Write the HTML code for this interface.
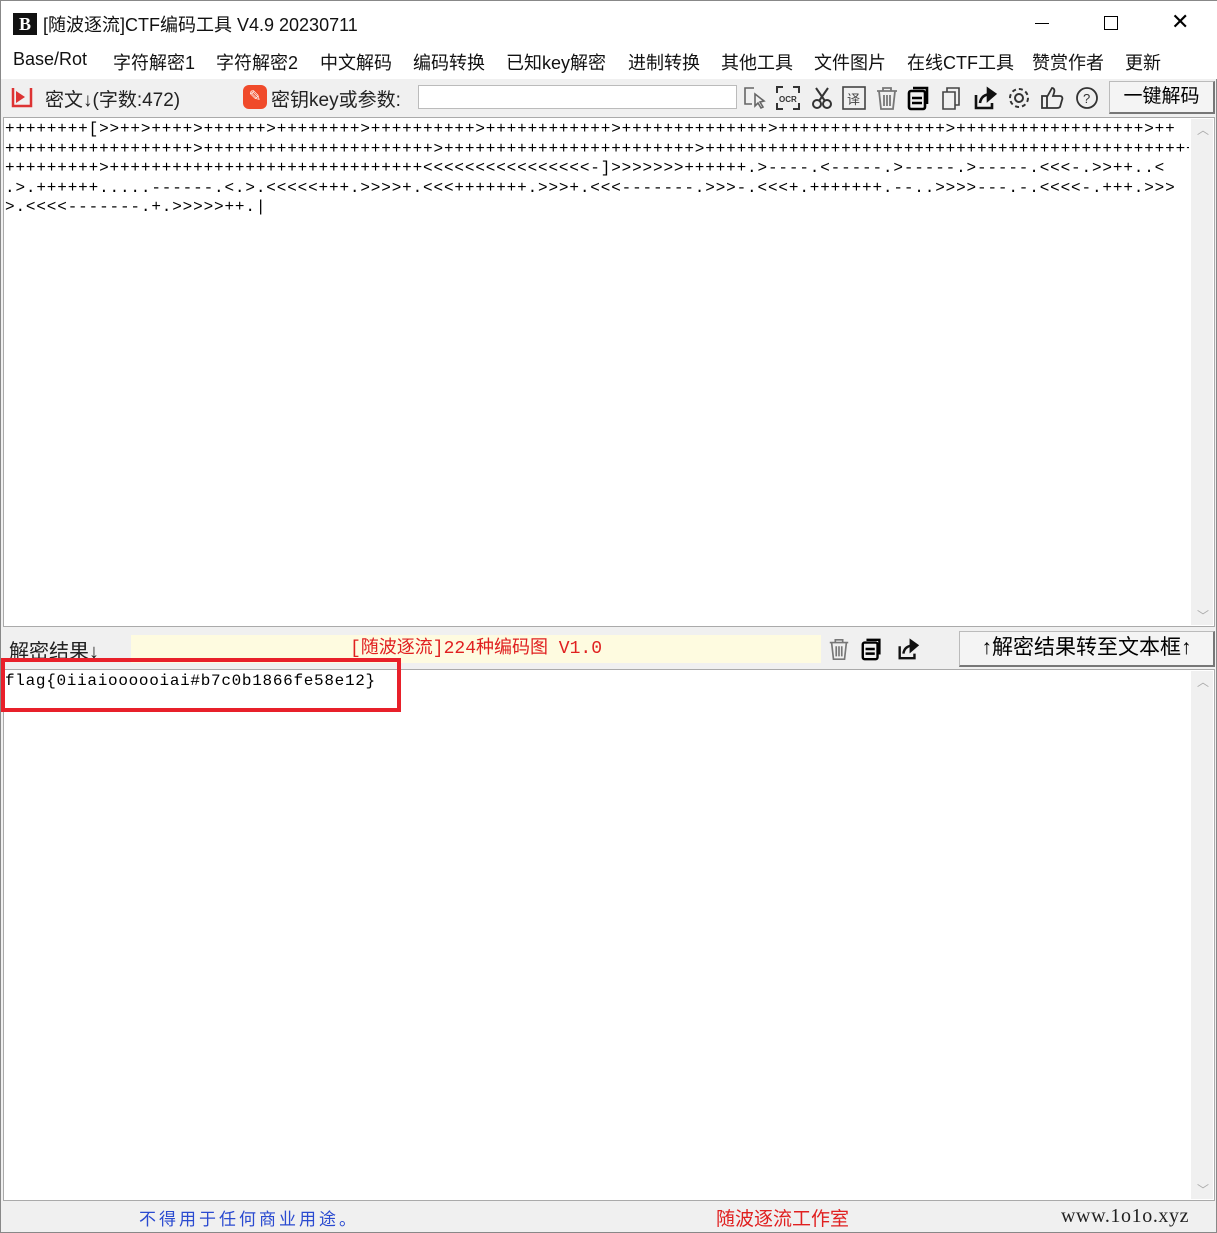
<!DOCTYPE html>
<html><head><meta charset="utf-8"><style>
*{margin:0;padding:0;box-sizing:border-box}
body{width:1217px;height:1233px;background:#f0f0f0;font-family:"Liberation Sans","Noto Sans CJK SC",sans-serif;position:relative;overflow:hidden;border:1px solid #888}
.a{position:absolute;white-space:nowrap}
.title{left:0;top:0;width:1217px;height:46px;background:#fff}
.menu{left:0;top:44px;width:1217px;height:34px;background:#fff;font-size:18px;color:#111}
.menu span{position:absolute;top:4px}
.ta{background:#fff;border:1px solid #aaa}
.mono{font-family:"Liberation Mono","Noto Sans CJK SC",monospace;font-size:16px;color:#000;line-height:19.5px;letter-spacing:0.85px}
.sb{background:#f0f0f0}
.ic{position:absolute;top:84px;width:26px;height:26px}
</style></head><body>
<div class="a title"></div>
<div class="a" style="left:12px;top:12px;width:24px;height:22px;background:#111;color:#fff;font:bold 18px 'Liberation Serif',serif;text-align:center;line-height:22px">B</div>
<div class="a" style="left:42px;top:10px;font-size:18px;color:#111">[随波逐流]CTF编码工具 V4.9 20230711</div>
<div class="a" style="left:1034px;top:22px;width:14px;height:1px;background:#000"></div>
<div class="a" style="left:1103px;top:15px;width:14px;height:14px;border:1px solid #000"></div>
<div class="a" style="left:1170px;top:8px;font-size:22px;color:#000">✕</div>
<div class="a menu">
<span style="left:12px">Base/Rot</span><span style="left:112px">字符解密1</span><span style="left:215px">字符解密2</span><span style="left:319px">中文解码</span><span style="left:412px">编码转换</span><span style="left:505px">已知key解密</span><span style="left:627px">进制转换</span><span style="left:720px">其他工具</span><span style="left:813px">文件图片</span><span style="left:906px">在线CTF工具</span><span style="left:1031px">赞赏作者</span><span style="left:1124px">更新</span>
</div>
<svg class="a" style="left:8px;top:84px" width="26" height="24"><path d="M4 3v18h18V3" fill="none" stroke="#d33" stroke-width="2.5"/><path d="M7 6l9 6-9 6z" fill="#d33"/></svg>
<div class="a" style="left:44px;top:84px;font-size:19px;color:#222">密文↓(字数:472)</div>
<div class="a" style="left:242px;top:84px;width:24px;height:24px;background:#f04a2a;border-radius:6px;color:#fff;font-size:15px;text-align:center;line-height:24px">✎</div>
<div class="a" style="left:270px;top:84px;font-size:19px;color:#222">密钥key或参数:</div>
<div class="a" style="left:417px;top:84px;width:319px;height:24px;background:#fff;border:1px solid #bbb"></div>
<svg class="ic" style="left:741px" viewBox="0 0 26 26" fill="none" stroke="#666" stroke-width="1.6"><path d="M12 3H3v16h7"/><path d="M13 9l9 7-4 1 3 5-2 1-3-5-3 3z"/></svg>
<svg class="ic" style="left:774px" viewBox="0 0 26 26" fill="none" stroke="#333" stroke-width="2"><path d="M2 8V2h6M18 2h6v6M24 18v6h-6M8 24H2v-6"/><text x="4" y="17" font-size="8" font-weight="bold" fill="#333" stroke="none" font-family="Liberation Sans">OCR</text></svg>
<svg class="ic" style="left:808px" viewBox="0 0 26 26" fill="none" stroke="#333" stroke-width="2"><circle cx="8" cy="19" r="4"/><circle cx="18" cy="19" r="4"/><path d="M10 16L19 3M16 16L7 3"/></svg>
<svg class="ic" style="left:840px" viewBox="0 0 26 26" fill="none" stroke="#444" stroke-width="1.6"><rect x="2" y="2" width="22" height="22"/><text x="6" y="19" font-size="13" fill="#444" stroke="none">译</text></svg>
<svg class="ic" style="left:873px" viewBox="0 0 26 26" fill="none" stroke="#777" stroke-width="1.8"><path d="M3 6h20M9 6V3h8v3M5 6l2 18h12l2-18M10 10v11M13 10v11M16 10v11"/></svg>
<svg class="ic" style="left:905px" viewBox="0 0 26 26" fill="none" stroke="#000" stroke-width="2.6"><rect x="3" y="6" width="16" height="18" rx="2"/><path d="M7 3h14v16M6 13h10M6 18h10"/></svg>
<svg class="ic" style="left:938px" viewBox="0 0 26 26" fill="none" stroke="#444" stroke-width="1.6"><path d="M4 7h12v17H4zM8 7V3h12v17h-4"/></svg>
<svg class="ic" style="left:971px" viewBox="0 0 26 26" fill="none" stroke="#111" stroke-width="2.6"><path d="M4 10v13h16v-5"/><path d="M8 18c1-7 6-9 12-9" /><path d="M16 4l7 5-7 6z" fill="#111"/></svg>
<svg class="ic" style="left:1005px" viewBox="0 0 26 26" fill="none" stroke="#333" stroke-width="2"><circle cx="13" cy="13" r="4"/><circle cx="13" cy="13" r="9" stroke-dasharray="4 3"/></svg>
<svg class="ic" style="left:1038px" viewBox="0 0 26 26" fill="none" stroke="#333" stroke-width="1.8"><path d="M3 11h5v12H3zM8 12l5-9c2 0 3 2 2 5l-1 3h7c2 0 3 2 2 4l-2 7c-1 1-2 1-3 1H8"/></svg>
<svg class="ic" style="left:1073px" viewBox="0 0 26 26" fill="none" stroke="#333" stroke-width="1.8"><circle cx="13" cy="13" r="10"/><text x="9" y="18" font-size="13" fill="#333" stroke="none" font-family="Liberation Sans">?</text></svg>
<div class="a" style="left:1108px;top:80px;width:106px;height:33px;background:#f4f4f4;border:1px solid #bbb;border-right:2px solid #777;border-bottom:2px solid #777;font-size:19px;text-align:center;line-height:29px">一键解码</div>
<div class="a ta" style="left:2px;top:116px;width:1212px;height:510px"></div>
<div class="a sb" style="left:1190px;top:118px;width:22px;height:506px"></div>
<div class="a" style="left:1196px;top:120px;font-size:12px;color:#aaa">︿</div>
<div class="a" style="left:1196px;top:606px;font-size:12px;color:#aaa">﹀</div>
<div class="a mono" style="left:4px;top:119px;width:1184px;overflow:hidden">
++++++++[&gt;&gt;++&gt;++++&gt;++++++&gt;++++++++&gt;++++++++++&gt;++++++++++++&gt;++++++++++++++&gt;++++++++++++++++&gt;++++++++++++++++++&gt;++<br>
++++++++++++++++++&gt;++++++++++++++++++++++&gt;++++++++++++++++++++++++&gt;+++++++++++++++++++++++++++++++++++++++++++++++<br>
+++++++++&gt;++++++++++++++++++++++++++++++&lt;&lt;&lt;&lt;&lt;&lt;&lt;&lt;&lt;&lt;&lt;&lt;&lt;&lt;&lt;&lt;-]&gt;&gt;&gt;&gt;&gt;&gt;&gt;++++++.&gt;----.&lt;-----.&gt;-----.&gt;-----.&lt;&lt;&lt;-.&gt;&gt;++..&lt;<br>
.&gt;.++++++.....------.&lt;.&gt;.&lt;&lt;&lt;&lt;&lt;+++.&gt;&gt;&gt;&gt;+.&lt;&lt;&lt;+++++++.&gt;&gt;&gt;+.&lt;&lt;&lt;-------.&gt;&gt;&gt;-.&lt;&lt;&lt;+.+++++++.--..&gt;&gt;&gt;&gt;---.-.&lt;&lt;&lt;&lt;-.+++.&gt;&gt;&gt;<br>
&gt;.&lt;&lt;&lt;&lt;-------.+.&gt;&gt;&gt;&gt;&gt;++.|
</div>
<div class="a" style="left:8px;top:634px;font-size:20px;color:#222">解密结果↓</div>
<div class="a" style="left:130px;top:634px;width:690px;height:28px;background:#fefbe0;color:#e02020;font-size:18px;text-align:center;line-height:28px;font-family:'Liberation Mono','Noto Sans CJK SC',monospace">[随波逐流]224种编码图 V1.0</div>
<svg class="a" style="left:826px;top:636px" width="24" height="24" viewBox="0 0 26 26" fill="none" stroke="#777" stroke-width="1.8"><path d="M3 6h20M9 6V3h8v3M5 6l2 18h12l2-18M10 10v11M13 10v11M16 10v11"/></svg>
<svg class="a" style="left:859px;top:636px" width="24" height="24" viewBox="0 0 26 26" fill="none" stroke="#000" stroke-width="2.6"><rect x="3" y="6" width="16" height="18" rx="2"/><path d="M7 3h14v16M6 13h10M6 18h10"/></svg>
<svg class="a" style="left:895px;top:636px" width="24" height="24" viewBox="0 0 26 26" fill="none" stroke="#111" stroke-width="2.6"><path d="M4 10v13h16v-5"/><path d="M8 18c1-7 6-9 12-9"/><path d="M16 4l7 5-7 6z" fill="#111"/></svg>
<div class="a" style="left:958px;top:630px;width:256px;height:36px;background:#f4f4f4;border:1px solid #bbb;border-right:2px solid #777;border-bottom:2px solid #777;font-size:21px;text-align:center;line-height:32px">↑解密结果转至文本框↑</div>
<div class="a ta" style="left:2px;top:668px;width:1212px;height:532px"></div>
<div class="a sb" style="left:1190px;top:670px;width:22px;height:528px"></div>
<div class="a" style="left:1196px;top:672px;font-size:12px;color:#aaa">︿</div>
<div class="a" style="left:1196px;top:1180px;font-size:12px;color:#aaa">﹀</div>
<div class="a mono" style="left:4px;top:671px;letter-spacing:0.7px">flag{0iiaioooooiai#b7c0b1866fe58e12}</div>
<div class="a" style="left:0;top:657px;width:400px;height:54px;border:4px solid #e8202a"></div>
<div class="a" style="left:138px;top:1204px;font-size:17px;color:#2a4ad0;letter-spacing:3px">不得用于任何商业用途。</div>
<div class="a" style="left:715px;top:1203px;font-size:19px;color:#e02020">随波逐流工作室</div>
<div class="a" style="left:1060px;top:1204px;font-size:20px;color:#222;font-family:'Liberation Serif',serif;letter-spacing:0.6px">www.1o1o.xyz</div>
</body></html>
